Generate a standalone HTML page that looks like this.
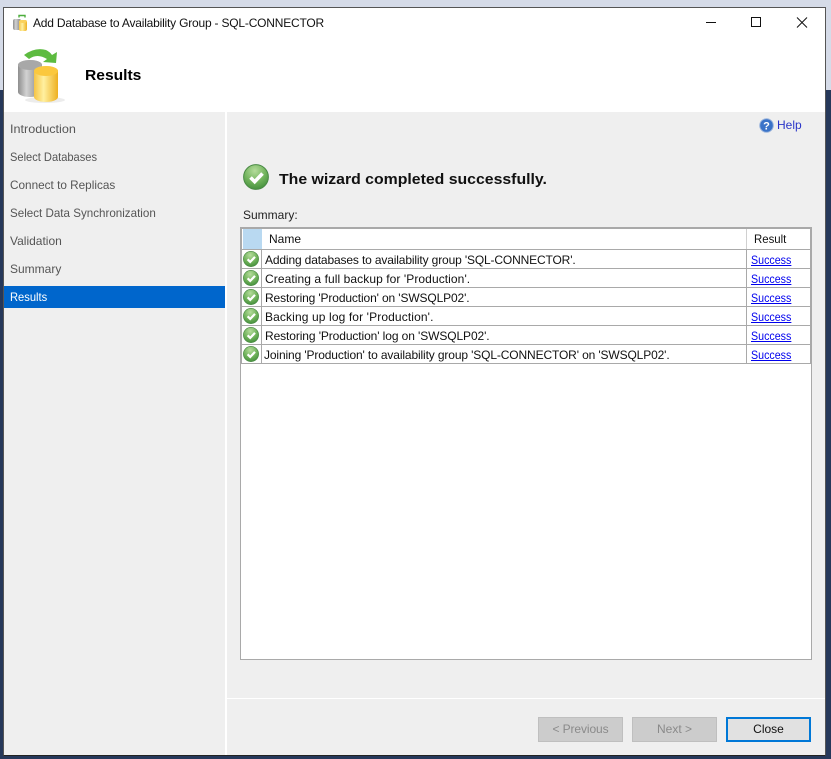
<!DOCTYPE html>
<html><head><meta charset="utf-8"><style>
html,body{margin:0;padding:0}
body{width:831px;height:759px;position:relative;overflow:hidden;background:#26385a;font-family:"Liberation Sans",sans-serif;font-size:12px;color:#222}
.a{position:absolute;white-space:nowrap}
.nav{left:10px;color:#555;font-size:12px;line-height:16px;transform-origin:0 50%}
.rowline{position:absolute;left:241px;width:570px;height:1px;background:#a9a9a9}
.t{position:absolute;left:265px;line-height:16px;white-space:nowrap;color:#111}
.l{position:absolute;left:751px;line-height:16px;color:#0000ee;text-decoration:underline;transform:scaleX(.89);transform-origin:0 50%}
.btn{position:absolute;top:717px;height:25px;box-sizing:border-box;text-align:center;line-height:23px}
</style></head><body>
<svg width="0" height="0" style="position:absolute"><defs>
<radialGradient id="g" cx="45%" cy="25%" r="80%"><stop offset="0" stop-color="#b5dc9c"/><stop offset=".55" stop-color="#71b35c"/><stop offset="1" stop-color="#408c39"/></radialGradient>
<symbol id="ok" viewBox="0 0 26 26"><circle cx="13" cy="13" r="12.4" fill="url(#g)" stroke="#4a8a45" stroke-width="1"/><path d="M7.5 13.5l4.2 4.2L19.5 9.5" fill="none" stroke="#fff" stroke-width="3.6"/></symbol>
<linearGradient id="gy" x1="0" x2="1" y1="0" y2="0"><stop offset="0" stop-color="#8e8e8e"/><stop offset=".35" stop-color="#d2d2d2"/><stop offset="1" stop-color="#7b7b7b"/></linearGradient>
<linearGradient id="ye" x1="0" x2="1" y1="0" y2="0"><stop offset="0" stop-color="#f5c445"/><stop offset=".4" stop-color="#fff0a0"/><stop offset="1" stop-color="#eeb020"/></linearGradient>
</defs></svg>

<div class="a" style="left:0;top:0;width:831px;height:90px;background:#d5dbe8"></div>
<div class="a" style="left:3px;top:7px;width:823px;height:749px;background:#fff;border:1px solid #555;border-bottom:1px solid #222;box-sizing:border-box"></div>

<svg class="a" style="left:13px;top:14px" width="16" height="17" viewBox="0 0 16 17">
<path d="M6 3.5V1.5h6v2" stroke="#4cae3c" stroke-width="1.4" fill="none"/>
<rect x="0" y="5" width="8" height="11" rx="2" fill="url(#gy)"/><rect x="6" y="6" width="8" height="11" rx="2" fill="url(#ye)"/><ellipse cx="10" cy="7.5" rx="4" ry="1.5" fill="#fbd15c"/>
</svg>
<div class="a" style="left:33px;top:15px;line-height:16px;font-size:12px;letter-spacing:-.2px;color:#111">Add Database to Availability Group - SQL-CONNECTOR</div>

<svg class="a" style="left:706px;top:16px" width="105" height="14" viewBox="0 0 105 14" fill="none" stroke="#111" stroke-width="1">
<path d="M0 6.5h10"/><rect x="45.5" y="1.5" width="9" height="9"/><path d="M91 1.5l10 10M101 1.5l-10 10"/></svg>

<svg class="a" style="left:15px;top:47px" width="52" height="58" viewBox="0 0 52 58">
<ellipse cx="30" cy="53" rx="20" ry="3" fill="#e4e4e4" opacity=".7"/>
<path d="M9 8Q20 0 31 3Q35 5 37 8L42 5 41 16 28 15 32 12Q22 6 14 12Z" fill="#5dbb40"/>
<path d="M3 18a12 5 0 0 1 24 0v27a12 5 0 0 1-24 0z" fill="url(#gy)"/><ellipse cx="15" cy="18" rx="12" ry="5" fill="#a8a8a8"/>
<path d="M19 24a12 5 0 0 1 24 0v26a12 5 0 0 1-24 0z" fill="url(#ye)"/><ellipse cx="31" cy="24" rx="12" ry="5" fill="#fbc83e"/>
</svg>
<div class="a" style="left:85px;top:67px;font-size:15px;font-weight:bold;line-height:18px;transform:scaleX(1.04);transform-origin:0 50%;color:#000">Results</div>

<div class="a" style="left:4px;top:112px;width:221px;height:643px;background:#efefef"></div>
<div class="a" style="left:227px;top:112px;width:598px;height:643px;background:#efefef"></div>
<div class="a" style="left:227px;top:698px;width:598px;height:1px;background:#fff"></div>

<div class="a nav" style="top:121px;transform:scaleX(1.05)">Introduction</div>
<div class="a nav" style="top:149px;transform:scaleX(.925)">Select Databases</div>
<div class="a nav" style="top:177px;transform:scaleX(.98)">Connect to Replicas</div>
<div class="a nav" style="top:205px;transform:scaleX(.967)">Select Data Synchronization</div>
<div class="a nav" style="top:233px">Validation</div>
<div class="a nav" style="top:261px">Summary</div>
<div class="a" style="left:4px;top:286px;width:221px;height:22px;background:#0066cc"></div>
<div class="a nav" style="top:289px;color:#fff;transform:scaleX(.93)">Results</div>

<svg class="a" style="left:759px;top:118px" width="15" height="15" viewBox="0 0 15 15"><circle cx="7.5" cy="7.5" r="6.8" fill="#3a73c8" stroke="#9ab4dc" stroke-width="1"/><text x="7.5" y="11.5" font-size="11" font-weight="bold" fill="#fff" text-anchor="middle" font-family="Liberation Sans">?</text></svg>
<div class="a" style="left:777px;top:117px;line-height:16px;color:#2a35c8">Help</div>

<svg class="a" style="left:243px;top:164px" width="26" height="26"><use href="#ok" width="26" height="26"/></svg>
<div class="a" style="left:279px;top:170px;font-size:15px;font-weight:bold;line-height:19px;transform:scaleX(1.055);transform-origin:0 50%;color:#111">The wizard completed successfully.</div>
<div class="a" style="left:243px;top:207px;line-height:16px;color:#222">Summary:</div>

<div class="a" style="left:240px;top:227px;width:572px;height:433px;background:#fff;border:1px solid #a9a9a9;box-sizing:border-box"></div>
<div class="a" style="left:241px;top:228px;width:570px;height:136px;border:0 solid #a9a9a9;border-width:1px 1px 0 1px;box-sizing:border-box"></div>
<div class="a" style="left:243px;top:229px;width:19px;height:20px;background:#b9d9f1"></div>
<div class="rowline" style="top:249px"></div><div class="rowline" style="top:268px"></div><div class="rowline" style="top:287px"></div><div class="rowline" style="top:306px"></div><div class="rowline" style="top:325px"></div><div class="rowline" style="top:344px"></div><div class="rowline" style="top:363px"></div>
<div class="a" style="left:261px;top:249px;width:1px;height:115px;background:#a9a9a9"></div>
<div class="a" style="left:746px;top:229px;width:1px;height:135px;background:#d0d0d0"></div>
<div class="a" style="left:746px;top:249px;width:1px;height:115px;background:#a9a9a9"></div>
<div class="a" style="left:269px;top:231px;line-height:16px;color:#111">Name</div>
<div class="a" style="left:754px;top:231px;line-height:16px;transform:scaleX(.95);transform-origin:0 50%;color:#111">Result</div>

<svg class="a" style="left:243px;top:251px" width="16" height="16"><use href="#ok" width="16" height="16"/></svg>
<svg class="a" style="left:243px;top:270px" width="16" height="16"><use href="#ok" width="16" height="16"/></svg>
<svg class="a" style="left:243px;top:289px" width="16" height="16"><use href="#ok" width="16" height="16"/></svg>
<svg class="a" style="left:243px;top:308px" width="16" height="16"><use href="#ok" width="16" height="16"/></svg>
<svg class="a" style="left:243px;top:327px" width="16" height="16"><use href="#ok" width="16" height="16"/></svg>
<svg class="a" style="left:243px;top:346px" width="16" height="16"><use href="#ok" width="16" height="16"/></svg>

<div class="t" style="top:252px;letter-spacing:-.145px">Adding databases to availability group 'SQL-CONNECTOR'.</div>
<div class="t" style="top:271px;letter-spacing:.08px">Creating a full backup for 'Production'.</div>
<div class="t" style="top:290px;letter-spacing:-.13px">Restoring 'Production' on 'SWSQLP02'.</div>
<div class="t" style="top:309px;letter-spacing:.12px">Backing up log for 'Production'.</div>
<div class="t" style="top:328px;letter-spacing:-.1px">Restoring 'Production' log on 'SWSQLP02'.</div>
<div class="t" style="top:347px;left:264px;letter-spacing:-.13px">Joining 'Production' to availability group 'SQL-CONNECTOR' on 'SWSQLP02'.</div>
<div class="l" style="top:252px">Success</div><div class="l" style="top:271px">Success</div><div class="l" style="top:290px">Success</div><div class="l" style="top:309px">Success</div><div class="l" style="top:328px">Success</div><div class="l" style="top:347px">Success</div>

<div class="btn" style="left:538px;width:85px;background:#ccc;border:1px solid #bfbfbf;color:#8a8a8a;letter-spacing:-.1px">&lt; Previous</div>
<div class="btn" style="left:632px;width:85px;background:#ccc;border:1px solid #bfbfbf;color:#8a8a8a">Next &gt;</div>
<div class="btn" style="left:726px;width:85px;background:#e1e1e1;border:2px solid #0078d7;line-height:21px;color:#111">Close</div>
</body></html>
